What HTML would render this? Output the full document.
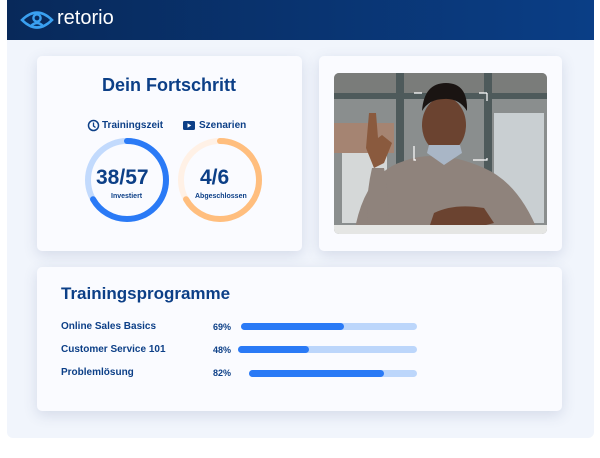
<!DOCTYPE html>
<html><head><meta charset="utf-8"><style>
*{margin:0;padding:0;box-sizing:border-box}
body{width:600px;height:458px;background:#fff;font-family:"Liberation Sans",sans-serif;position:relative;overflow:hidden}
.panel{position:absolute;left:7px;top:0;width:587px;height:438px;background:#f1f5fc;border-radius:0 0 6px 6px}
.hdr{position:absolute;left:7px;top:0;width:587px;height:40px;background:linear-gradient(90deg,#08295a,#0a3e86)}
.card{position:absolute;background:#fafbff;border-radius:5px;box-shadow:0 4px 14px rgba(60,80,130,.16)}
.t{position:absolute;color:#0c3f87;font-weight:bold;white-space:nowrap}
.bar{position:absolute;height:7px;border-radius:4px;background:#bcd6fb}
.bar i{display:block;height:7px;border-radius:4px;background:#2a7af6}
</style></head><body>
<div class="panel"></div>
<div class="hdr"></div>
<svg style="position:absolute;left:20px;top:9px" width="34" height="22" viewBox="0 0 34 22">
<path d="M2 11 Q17 -4 32 11 Q17 26 2 11Z" fill="none" stroke="#3aa0f0" stroke-width="2.6"/>
<circle cx="17" cy="9" r="3.6" fill="none" stroke="#3aa0f0" stroke-width="2.4"/>
<path d="M10 18 Q17 10 24 18" fill="none" stroke="#3aa0f0" stroke-width="2.4"/>
</svg>
<div style="position:absolute;left:57px;top:7px;color:#fff;font-size:20px">retorio</div>

<div class="card" style="left:37px;top:56px;width:265px;height:195px"></div>
<div class="card" style="left:319px;top:56px;width:243px;height:195px"></div>
<div class="card" style="left:37px;top:267px;width:525px;height:144px"></div>

<div class="t" style="left:102px;top:75px;font-size:18px">Dein Fortschritt</div>
<svg style="position:absolute;left:87px;top:119px" width="13" height="13"><circle cx="6.5" cy="6.5" r="5" fill="none" stroke="#0c3f87" stroke-width="1.5"/><path d="M6.5 3.5V7L8.5 8.5" stroke="#0c3f87" stroke-width="1.3" fill="none"/></svg>
<div class="t" style="left:102px;top:120px;font-size:10px">Trainingszeit</div>
<svg style="position:absolute;left:183px;top:121px" width="12" height="9"><rect width="12" height="9" rx="1.5" fill="#0c3f87"/><path d="M4.5 2.3V6.7L8.3 4.5Z" fill="#fff"/></svg>
<div class="t" style="left:199px;top:120px;font-size:10px">Szenarien</div>

<svg style="position:absolute;left:80px;top:134px" width="200" height="92">
<circle cx="47" cy="46" r="39" fill="none" stroke="#c2dafd" stroke-width="6"/>
<circle cx="47" cy="46" r="39" fill="none" stroke="#2a7af6" stroke-width="6" stroke-dasharray="163.4 245" transform="rotate(-90 47 46)" stroke-linecap="round"/>
<circle cx="140" cy="46" r="39" fill="none" stroke="#fff1e6" stroke-width="6"/>
<circle cx="140" cy="46" r="39" fill="none" stroke="#ffbe7e" stroke-width="6" stroke-dasharray="163.4 245" transform="rotate(-90 140 46)" stroke-linecap="round"/>
</svg>
<div class="t" style="left:96px;top:166px;font-size:21px">38/57</div>
<div class="t" style="left:111px;top:193px;font-size:7px">Investiert</div>
<div class="t" style="left:200px;top:166px;font-size:21px">4/6</div>
<div class="t" style="left:195px;top:193px;font-size:7px">Abgeschlossen</div>

<svg style="position:absolute;left:334px;top:73px" width="213" height="161" viewBox="0 0 213 161">
<defs><clipPath id="c"><rect width="213" height="161" rx="5"/></clipPath></defs>
<g clip-path="url(#c)">
<rect width="213" height="161" fill="#8a8e8e"/>
<rect x="0" y="0" width="213" height="20" fill="#7a7c7a"/>
<rect x="0" y="20" width="213" height="6" fill="#4e5a5b"/>
<rect x="62" y="0" width="8" height="161" fill="#4e5a5b"/>
<rect x="150" y="0" width="8" height="161" fill="#4e5a5b"/>
<rect x="160" y="40" width="50" height="110" fill="#c9cfd2"/>
<rect x="8" y="80" width="45" height="70" fill="#d5d8d8"/>
<rect x="0" y="50" width="60" height="30" fill="#a58472"/>
<path d="M20 161 Q30 100 70 88 Q105 75 150 95 Q185 110 205 161Z" fill="#8f837c"/>
<path d="M32 75 L35 40 L42 40 L44 65 L48 62 L58 70 L50 90 L40 95Z" fill="#8a5a3e"/>
<path d="M38 95 Q30 130 35 161 L55 161 Q55 120 50 95Z" fill="#8f837c"/>
<ellipse cx="110" cy="52" rx="22" ry="28" fill="#6b4330"/>
<path d="M88 38 Q90 10 112 10 Q134 10 133 38 Q125 25 110 26 Q95 26 88 38Z" fill="#1a1412"/>
<path d="M93 80 L110 92 L128 80 L126 72 L95 72Z" fill="#a9b6c6"/>
<path d="M100 140 Q120 130 150 135 L160 150 L120 160 L95 155Z" fill="#6b4330"/>
<rect x="0" y="152" width="213" height="9" fill="#e5e6e4"/>
<rect x="80" y="20" width="73" height="67" fill="none" stroke="#fff" stroke-width="1.2" stroke-dasharray="8 57 8 0"/>
</g></svg>

<div class="t" style="left:61px;top:284px;font-size:17px">Trainingsprogramme</div>
<div class="t" style="left:61px;top:321px;font-size:10px">Online Sales Basics</div>
<div class="t" style="left:61px;top:344px;font-size:10px">Customer Service 101</div>
<div class="t" style="left:61px;top:367px;font-size:10px">Problemlösung</div>
<div class="t" style="left:213px;top:322px;font-size:9px">69%</div>
<div class="t" style="left:213px;top:345px;font-size:9px">48%</div>
<div class="t" style="left:213px;top:368px;font-size:9px">82%</div>
<div class="bar" style="left:241px;top:323px;width:176px"><i style="width:103px"></i></div>
<div class="bar" style="left:238px;top:346px;width:179px"><i style="width:71px"></i></div>
<div class="bar" style="left:249px;top:370px;width:168px"><i style="width:135px"></i></div>
</body></html>
